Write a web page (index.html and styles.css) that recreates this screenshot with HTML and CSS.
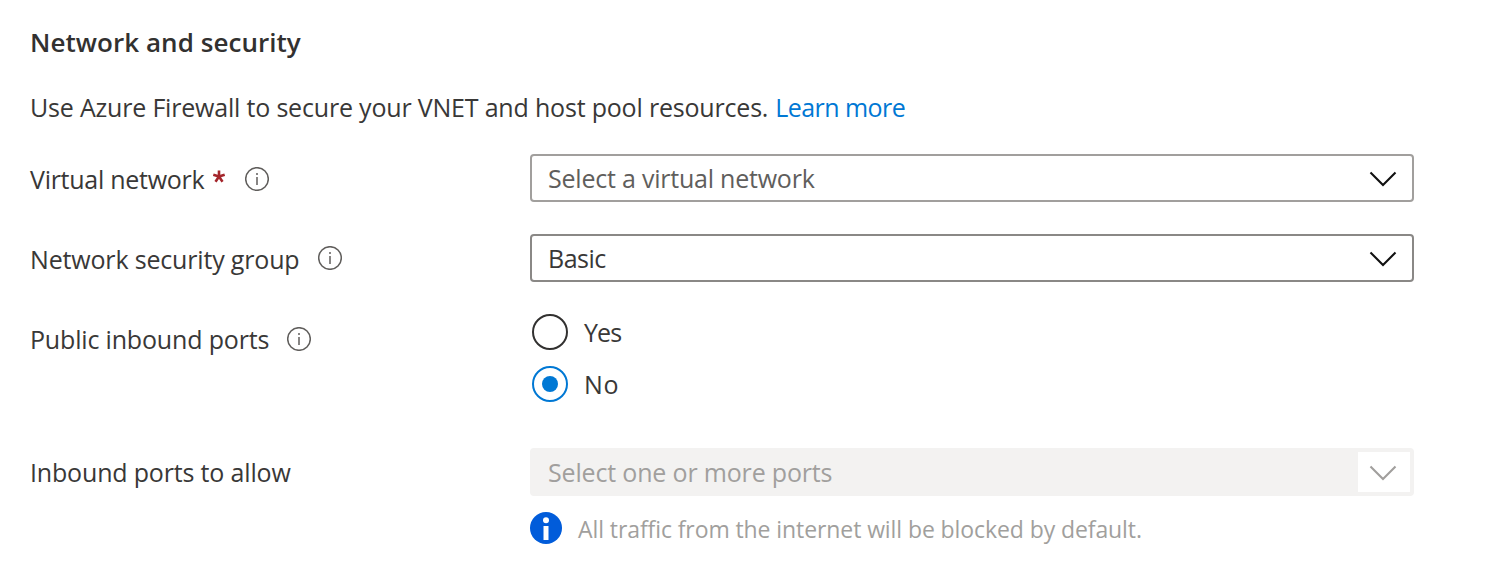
FILE: index.html
```html
<!DOCTYPE html>
<html lang="en">
<head>
<meta charset="utf-8">
<title>Network and security</title>
<link rel="stylesheet" href="styles.css">
</head>
<body>
<main class="panel">
  <h2 class="title">Network and security</h2>
  <p class="intro"><span>Use Azure Firewall to secure your VNET and host pool resources.</span><a class="link">Learn more</a></p>

  <div class="row row-vnet">
    <div class="label"><span class="t-vnet">Virtual network</span><svg class="star" viewBox="0 0 12 13" width="12" height="13"><path d="M6 6.600V.4M6 6.600L.3 4.700M6 6.600l5.700-1.900M6 6.600L2.500 11.700M6 6.600l3.500 5.100"/></svg><svg class="info" viewBox="0 0 24 24" width="24" height="24"><circle cx="12" cy="12" r="11.300"/><path d="M12 10v8M12 6v2"/></svg></div>
    <div class="select placeholder"><span class="t-select">Select a virtual network</span><svg class="chevron" viewBox="0 0 28 16" width="28" height="16"><path d="M1.500 1.500L14 14 26.500 1.500"/></svg></div>
  </div>
  <div class="row row-nsg">
    <div class="label"><span>Network security group</span><svg class="info up" viewBox="0 0 24 24" width="24" height="24"><circle cx="12" cy="12" r="11.300"/><path d="M12 10v8M12 6v2"/></svg></div>
    <div class="select"><span class="t-basic">Basic</span><svg class="chevron" viewBox="0 0 28 16" width="28" height="16"><path d="M1.500 1.500L14 14 26.500 1.500"/></svg></div>
  </div>
  <div class="row row-public">
    <div class="label"><span>Public inbound ports</span><svg class="info" viewBox="0 0 24 24" width="24" height="24"><circle cx="12" cy="12" r="11.300"/><path d="M12 10v8M12 6v2"/></svg></div>
    <div class="radios">
      <div class="radio"><span class="dot"></span><span class="t-yes">Yes</span></div>
      <div class="radio checked"><span class="dot"></span><span class="t-no">No</span></div>
    </div>
  </div>
  <div class="row row-inbound">
    <div class="label"><span>Inbound ports to allow</span></div>
    <div class="select disabled"><span>Select one or more ports</span><div class="arrow-box"><svg class="chevron" viewBox="0 0 28 16" width="28" height="16"><path d="M1.500 1.500L14 14 26.500 1.500"/></svg></div></div>
  </div>
  <div class="note"><svg viewBox="0 0 32 32" width="32" height="32"><circle class="disc" cx="16" cy="16" r="16"/><circle class="mark" cx="16" cy="8.300" r="3"/><path class="mark" d="M13.500 14h5v14h-5z"/></svg><span class="note-text">All traffic from the internet will be blocked by default.</span></div>
</main>
</body>
</html>
```
FILE: styles.css
```css
* { box-sizing: border-box; }
body {
  margin: 0;
  background: #fff;
  color: #393837;
  font: 25px/36px "Open Sans", "Noto Sans", sans-serif;
  letter-spacing: -0.17px;
  white-space: nowrap;
}
svg { display: block; flex: none; fill: none; }
.panel { width: 1414px; height: 582px; padding: 24px 0 0 30px; overflow: hidden; }
.title { margin: 0; color: #323130; font-size: 26px; font-weight: 600; line-height: 36px; letter-spacing: 0.05px; }
.intro { display: flex; gap: 7px; margin: 29px 0 29px; letter-spacing: -0.19px; }
.link { color: #0078d4; letter-spacing: -0.55px; }
.row { display: grid; grid-template-columns: 500px 1fr; }
.row-vnet, .row-nsg { height: 80px; }
.row-public { height: 138px; margin-top: -4px; }
.row-inbound { height: 64px; }
.label { display: flex; align-items: flex-start; padding-top: 7px; }
.row-public .label { padding-top: 11px; }
.row-inbound .label { padding-top: 6px; }
.t-vnet { letter-spacing: -0.27px; }
.t-select { letter-spacing: -0.22px; }
.t-basic { letter-spacing: -0.5px; }
.t-yes { letter-spacing: -0.9px; }
.t-no { letter-spacing: 0.6px; }
.star { margin: 9px 0 0 9px; stroke: #a4262c; stroke-width: 2.6; }
.info { margin: 6px 0 0 20px; stroke: #605e5c; stroke-width: 1.5; }
.info.up { margin: 5px 0 0 19px; }
.row-public .info { margin-left: 18px; }
.select {
  display: flex;
  align-items: center;
  justify-content: space-between;
  height: 48px;
  padding: 0 15px 0 16px;
  border: 2px solid #8a8886;
  border-radius: 4px;
}
.placeholder { color: #605e5c; border-color: #a19f9d; }
.chevron { margin-top: 2px; stroke: #111; stroke-width: 2.1; }
.disabled { padding-right: 2px; color: #a19f9d; background: #f3f2f1; border-color: #f3f2f1; }
.disabled .chevron { stroke: #a19f9d; }
.arrow-box { display: flex; align-items: center; justify-content: flex-end; width: 52px; height: 40px; padding-right: 13px; background: #fff; }
.radios { padding: 4px 0 0 2px; }
.radio { display: flex; align-items: center; gap: 16px; height: 36px; margin-bottom: 16px; }
.dot { display: grid; place-items: center; width: 36px; height: 36px; border: 2px solid #323130; border-radius: 50%; }
.checked .dot { border-color: #0078d4; }
.checked .dot::before { content: ""; width: 16px; height: 16px; border-radius: 50%; background: #0078d4; }
.note { display: flex; gap: 16px; margin-left: 500px; color: #a19f9d; font-size: 23px; line-height: 32px; letter-spacing: -0.09px; }
.note-text { padding-top: 1px; }
.disc { fill: #015cda; }
.mark { fill: #fff; }
```
